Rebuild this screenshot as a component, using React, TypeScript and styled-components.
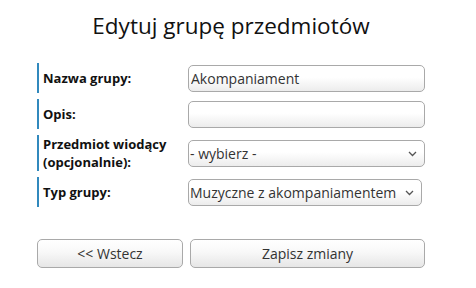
import React from 'react'
import styled, { createGlobalStyle } from 'styled-components'

const GlobalStyle = createGlobalStyle`
  body {
    margin: 0;
    background: #ffffff;
    font-family: "Open Sans", Lato, sans-serif;
    color: #111111;
  }
`

const Page = styled.div`
  width: 462px;
  display: flex;
  flex-direction: column;
  align-items: center;
`

const Title = styled.h1`
  margin: 12px 0 0;
  font-size: 22.5px;
  font-weight: 400;
  line-height: 28px;
  color: #111111;
`

const Form = styled.form`
  margin-top: 23px;
  width: 388px;
  display: grid;
  grid-template-columns: 144px 237px;
  column-gap: 7px;
  row-gap: 6px;
`

const Label = styled.label`
  min-height: 30px;
  display: flex;
  align-items: center;
  padding: 0 4px;
  border-left: 2px solid #3189bd;
  font-size: 13px;
  font-weight: 700;
  line-height: 18px;
  color: #111111;
`

const Field = styled.div`
  display: flex;
  align-items: center;
`

const fieldLook = `
  height: 27px;
  box-sizing: border-box;
  border: 1px solid #a9a9a9;
  border-radius: 5px;
  background: linear-gradient(#ffffff 0%, #ffffff 45%, #ececec 100%);
  font-family: "Open Sans", Lato, sans-serif;
  font-size: 14px;
  color: #333333;
  outline: none;
`

const TextInput = styled.input`
  ${fieldLook}
  width: 100%;
  padding: 0 2px;
`

const SelectBox = styled.div<{ $full?: boolean }>`
  position: relative;
  width: ${(p) => (p.$full ? '100%' : 'auto')};
`

const Select = styled.select`
  ${fieldLook}
  width: 100%;
  appearance: none;
  padding: 0 24px 0 1px;
`

const Chevron = styled.svg`
  position: absolute;
  right: 8px;
  top: 11px;
  pointer-events: none;
`

const Actions = styled.div`
  margin-top: 32px;
  width: 388px;
  display: grid;
  grid-template-columns: 146px 235px;
  column-gap: 7px;
`

const Button = styled.button`
  height: 29px;
  border: 1px solid #a9a9a9;
  border-radius: 5px;
  background: linear-gradient(#ffffff 0%, #f8f8f8 45%, #e6e6e6 100%);
  font-family: "Open Sans", Lato, sans-serif;
  font-size: 14px;
  color: #333333;
`

function Arrow() {
  return (
    <Chevron width="9" height="6" viewBox="0 0 9 6">
      <path d="M1 1l3.5 3.5L8 1" fill="none" stroke="#555" strokeWidth="1.3" />
    </Chevron>
  )
}

export default function App() {
  return (
    <Page>
      <GlobalStyle />
      <Title>Edytuj grupę przedmiotów</Title>
      <Form>
        <Label>Nazwa grupy:</Label>
        <Field>
          <TextInput defaultValue="Akompaniament" />
        </Field>

        <Label>Opis:</Label>
        <Field>
          <TextInput defaultValue="" />
        </Field>

        <Label>Przedmiot wiodący (opcjonalnie):</Label>
        <Field>
          <SelectBox $full>
            <Select defaultValue="">
              <option value="">- wybierz -</option>
            </Select>
            <Arrow />
          </SelectBox>
        </Field>

        <Label>Typ grupy:</Label>
        <Field>
          <SelectBox>
            <Select defaultValue="muz">
              <option value="muz">Muzyczne z akompaniamentem</option>
            </Select>
            <Arrow />
          </SelectBox>
        </Field>
      </Form>
      <Actions>
        <Button type="button">&lt;&lt; Wstecz</Button>
        <Button type="button">Zapisz zmiany</Button>
      </Actions>
    </Page>
  )
}
